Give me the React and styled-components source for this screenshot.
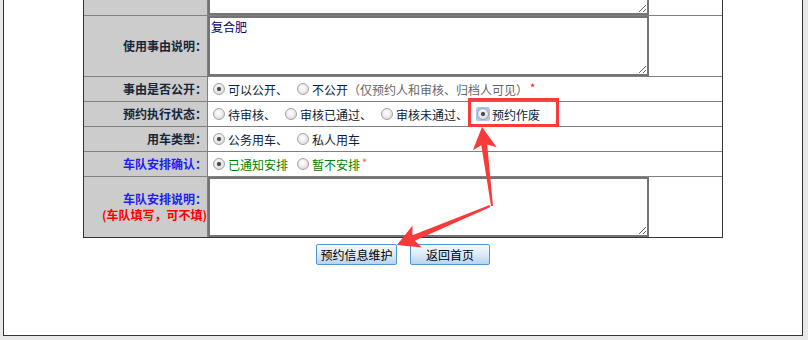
import React from "react";
import styled, { createGlobalStyle, css } from "styled-components";

const Global = createGlobalStyle`
  html, body { margin: 0; padding: 0; background: #e8e8e8; overflow: hidden; }
  body { font-family: "Noto Sans CJK SC", "Noto Sans", sans-serif; font-size: 12px; }
`;

const Page = styled.div`
  position: relative;
  width: 808px;
  height: 340px;
  overflow: hidden;
`;

const Panel = styled.div`
  margin: -47px 5px 0 3px;
  border: 1px solid #333;
  background: #fff;
  padding-bottom: 70px;
`;

const Table = styled.div`
  box-sizing: border-box;
  width: 640px;
  margin: 0 auto;
  display: grid;
  grid-template-columns: 123px 1fr;
  grid-template-rows: 60px 60px 24px 24px 24px 24px 60px;
  gap: 1px;
  background: #808080;
  border: 1px solid #333;
`;

const Label = styled.div`
  background: #cccccc;
  display: flex;
  align-items: center;
  justify-content: flex-end;
  text-align: right;
  font-weight: bold;
  font-size: 12px;
  line-height: 16px;
  white-space: nowrap;
  color: ${(p) => p.$color || "#15273a"};
`;

const LabelLine = styled.div`
  color: ${(p) => p.$color || "inherit"};
`;

const Value = styled.div`
  background: #fff;
  display: flex;
  align-items: ${(p) => (p.$stretch ? "stretch" : "center")};
  white-space: nowrap;
  color: #0c2235;
  font-size: 12px;
`;

const Area = styled.textarea`
  box-sizing: border-box;
  width: 441px;
  height: 100%;
  margin: 0;
  border: 2px solid #747474;
  padding: 1px;
  font-family: "Noto Sans CJK SC", sans-serif;
  font-size: 12px;
  line-height: 15px;
  color: #000080;
  background: #fff;
  outline: none;
  resize: both;
  overflow: hidden;
`;

const Option = styled.span`
  display: inline-flex;
  align-items: center;
  margin-right: 4px;
  color: ${(p) => p.$color || "inherit"};
`;

const FocusBox = styled.span`
  display: inline-flex;
  align-items: center;
  justify-content: center;
  box-sizing: border-box;
  width: 14px;
  height: 14px;
  margin: 0 2px 0 4px;
  border-radius: 2px;
  background: #a9c8f2;
  flex: none;
`;

const Radio = styled.span`
  display: inline-block;
  position: relative;
  box-sizing: border-box;
  width: 12px;
  height: 12px;
  flex: none;
  border-radius: 50%;
  border: 1px solid #a3a3a3;
  background: radial-gradient(circle at 45% 40%, #ffffff 0%, #f2f2f2 35%, #cfcfcf 100%);
  margin: ${(p) => (p.$bare ? "0" : "0 3px 0 5px")};
  ${(p) =>
    p.$checked &&
    css`
      &::after {
        content: "";
        position: absolute;
        left: 3px;
        top: 3px;
        width: 4px;
        height: 4px;
        border-radius: 50%;
        background: #4a4a4a;
        box-shadow: 0 0 1px #777;
      }
    `}
`;

const Muted = styled.span`
  color: #666;
`;

const Star = styled.span`
  color: ${(p) => p.$color || "#f00"};
  font-size: 11px;
  margin-left: 2px;
  position: relative;
  top: -2px;
`;

const ButtonBar = styled.div`
  display: flex;
  justify-content: center;
  gap: 13px;
  margin-top: 6px;
`;

const Button = styled.button`
  box-sizing: border-box;
  width: ${(p) => p.$w || 80}px;
  height: 21px;
  padding: 0;
  border: 1px solid #4f96d6;
  border-radius: 2px;
  background: linear-gradient(#f5faff, #dbeaf8 50%, #b8d4ee);
  color: #000;
  font-family: "Noto Sans CJK SC", sans-serif;
  font-size: 12px;
  line-height: 19px;
  cursor: pointer;
`;

const Overlay = styled.svg`
  position: absolute;
  left: 0;
  top: 0;
  pointer-events: none;
`;

function arrowPoints(tx, ty, px, py, L = 22, W = 12, S = 3, T = 1) {
  const dx = px - tx;
  const dy = py - ty;
  const len = Math.hypot(dx, dy);
  const ux = dx / len;
  const uy = dy / len;
  const nx = -uy;
  const ny = ux;
  const bx = px - ux * L;
  const by = py - uy * L;
  const sx = px - ux * (L - 4);
  const sy = py - uy * (L - 4);
  const pts = [
    [tx + nx * T, ty + ny * T],
    [sx + nx * S, sy + ny * S],
    [bx + nx * W, by + ny * W],
    [px, py],
    [bx - nx * W, by - ny * W],
    [sx - nx * S, sy - ny * S],
    [tx - nx * T, ty - ny * T],
  ];
  return pts.map((p) => p.map((v) => v.toFixed(1)).join(",")).join(" ");
}

export default function App() {
  return (
    <Page>
      <Global />
      <Panel>
        <Table>
          <Label />
          <Value $stretch>
            <Area defaultValue="" />
          </Value>

          <Label>使用事由说明：</Label>
          <Value $stretch>
            <Area defaultValue="复合肥" />
          </Value>

          <Label>事由是否公开：</Label>
          <Value>
            <Option>
              <Radio $checked />
              可以公开、
            </Option>
            <Option>
              <Radio />
              不公开<Muted>（仅预约人和审核、归档人可见）</Muted>
              <Star>*</Star>
            </Option>
          </Value>

          <Label>预约执行状态：</Label>
          <Value>
            <Option>
              <Radio />
              待审核、
            </Option>
            <Option>
              <Radio />
              审核已通过、
            </Option>
            <Option>
              <Radio />
              审核未通过、
            </Option>
            <Option>
              <FocusBox>
                <Radio $checked $bare />
              </FocusBox>
              预约作废
            </Option>
          </Value>

          <Label>用车类型：</Label>
          <Value>
            <Option>
              <Radio $checked />
              公务用车、
            </Option>
            <Option>
              <Radio />
              私人用车
            </Option>
          </Value>

          <Label $color="#2020f0">车队安排确认：</Label>
          <Value>
            <Option $color="#008000">
              <Radio $checked />
              已通知安排
            </Option>
            <Option $color="#008000">
              <Radio />
              暂不安排
              <Star $color="#ff4d4d">*</Star>
            </Option>
          </Value>

          <Label>
            <div>
              <LabelLine $color="#2020f0">车队安排说明：</LabelLine>
              <LabelLine $color="#ff0000">(车队填写，可不填)</LabelLine>
            </div>
          </Label>
          <Value $stretch>
            <Area defaultValue="" />
          </Value>
        </Table>

        <ButtonBar>
          <Button $w={81}>预约信息维护</Button>
          <Button $w={80}>返回首页</Button>
        </ButtonBar>
      </Panel>

      <Overlay width="808" height="340" viewBox="0 0 808 340">
        <rect x="469.5" y="99.5" width="88" height="26" fill="none" stroke="#f83a3a" strokeWidth="3" />
        <polygon points={arrowPoints(492, 206, 482, 127)} fill="#f83a3a" />
        <polygon points={arrowPoints(490, 206, 397, 245)} fill="#f83a3a" />
      </Overlay>
    </Page>
  );
}
